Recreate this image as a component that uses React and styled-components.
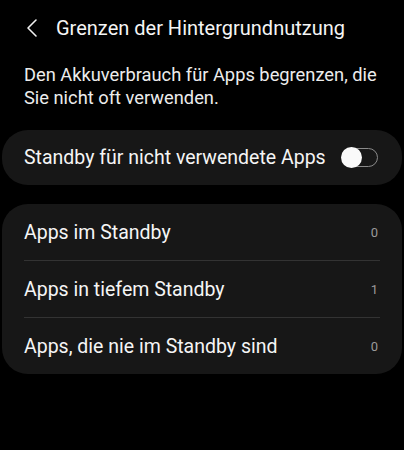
import styled, { createGlobalStyle } from 'styled-components';

const Global = createGlobalStyle`
  html, body {
    margin: 0;
    background: #000;
  }
  body {
    font-family: Roboto, "Noto Sans", sans-serif;
    color: #f5f5f5;
  }
`;

const rows = [
  { label: 'Apps im Standby', count: 0 },
  { label: 'Apps in tiefem Standby', count: 1 },
  { label: 'Apps, die nie im Standby sind', count: 0 },
];

export default function App() {
  return (
    <>
      <Global />
      <Page>
        <Header>
          <Back>
            <svg width="12" height="20" viewBox="0 0 12 20">
              <path d="M10 2 L2 10 L10 18" fill="none" stroke="#f0f0f0" strokeWidth="1.6" strokeLinecap="round" strokeLinejoin="round" />
            </svg>
          </Back>
          <Title>Grenzen der Hintergrundnutzung</Title>
        </Header>
        <Description>
          Den Akkuverbrauch für Apps begrenzen, die
          <br />
          Sie nicht oft verwenden.
        </Description>
        <Card $gap={21}>
          <SwitchRow>
            <Label>Standby für nicht verwendete Apps</Label>
            <Toggle>
              <Knob />
            </Toggle>
          </SwitchRow>
        </Card>
        <Card $gap={19}>
          {rows.map((row, i) => (
            <Row key={row.label} $last={i === rows.length - 1}>
              <Label>{row.label}</Label>
              <Count>{row.count}</Count>
            </Row>
          ))}
        </Card>
      </Page>
    </>
  );
}

const Page = styled.div`
  display: flex;
  flex-direction: column;
  width: 404px;
  height: 450px;
  padding: 0 2px;
  box-sizing: border-box;
`;

const Header = styled.div`
  display: flex;
  align-items: center;
  height: 56px;
  padding-left: 24px;
`;

const Back = styled.div`
  display: flex;
  align-items: center;
  width: 30px;
`;

const Title = styled.h1`
  margin: 0;
  font-size: 20px;
  font-weight: 400;
  color: #f5f5f5;
`;

const Description = styled.p`
  margin: 7px 0 0;
  padding: 0 22px;
  font-size: 18.3px;
  line-height: 23px;
  color: #ececec;
  white-space: nowrap;
`;

const Card = styled.div`
  background: #171717;
  border-radius: 26px;
  margin-top: ${(p) => p.$gap}px;
  padding: 0 22px;
`;

const SwitchRow = styled.div`
  display: flex;
  align-items: center;
  justify-content: space-between;
  height: 55px;
`;

const Label = styled.span`
  font-size: 19.5px;
  color: #f5f5f5;
`;

const Toggle = styled.div`
  position: relative;
  width: 36px;
  height: 19px;
  border: 1.5px solid #8a8a8a;
  border-radius: 11px;
  box-sizing: border-box;
  margin-right: 2px;
`;

const Knob = styled.div`
  position: absolute;
  left: -2px;
  top: -2.5px;
  width: 21px;
  height: 21px;
  border-radius: 50%;
  background: #fafafa;
`;

const Row = styled.div`
  display: flex;
  align-items: center;
  justify-content: space-between;
  height: 56px;
  border-bottom: ${(p) => (p.$last ? 'none' : '1px solid #333')};
`;

const Count = styled.span`
  font-size: 13px;
  color: #9a9a9a;
  margin-right: 2px;
`;
